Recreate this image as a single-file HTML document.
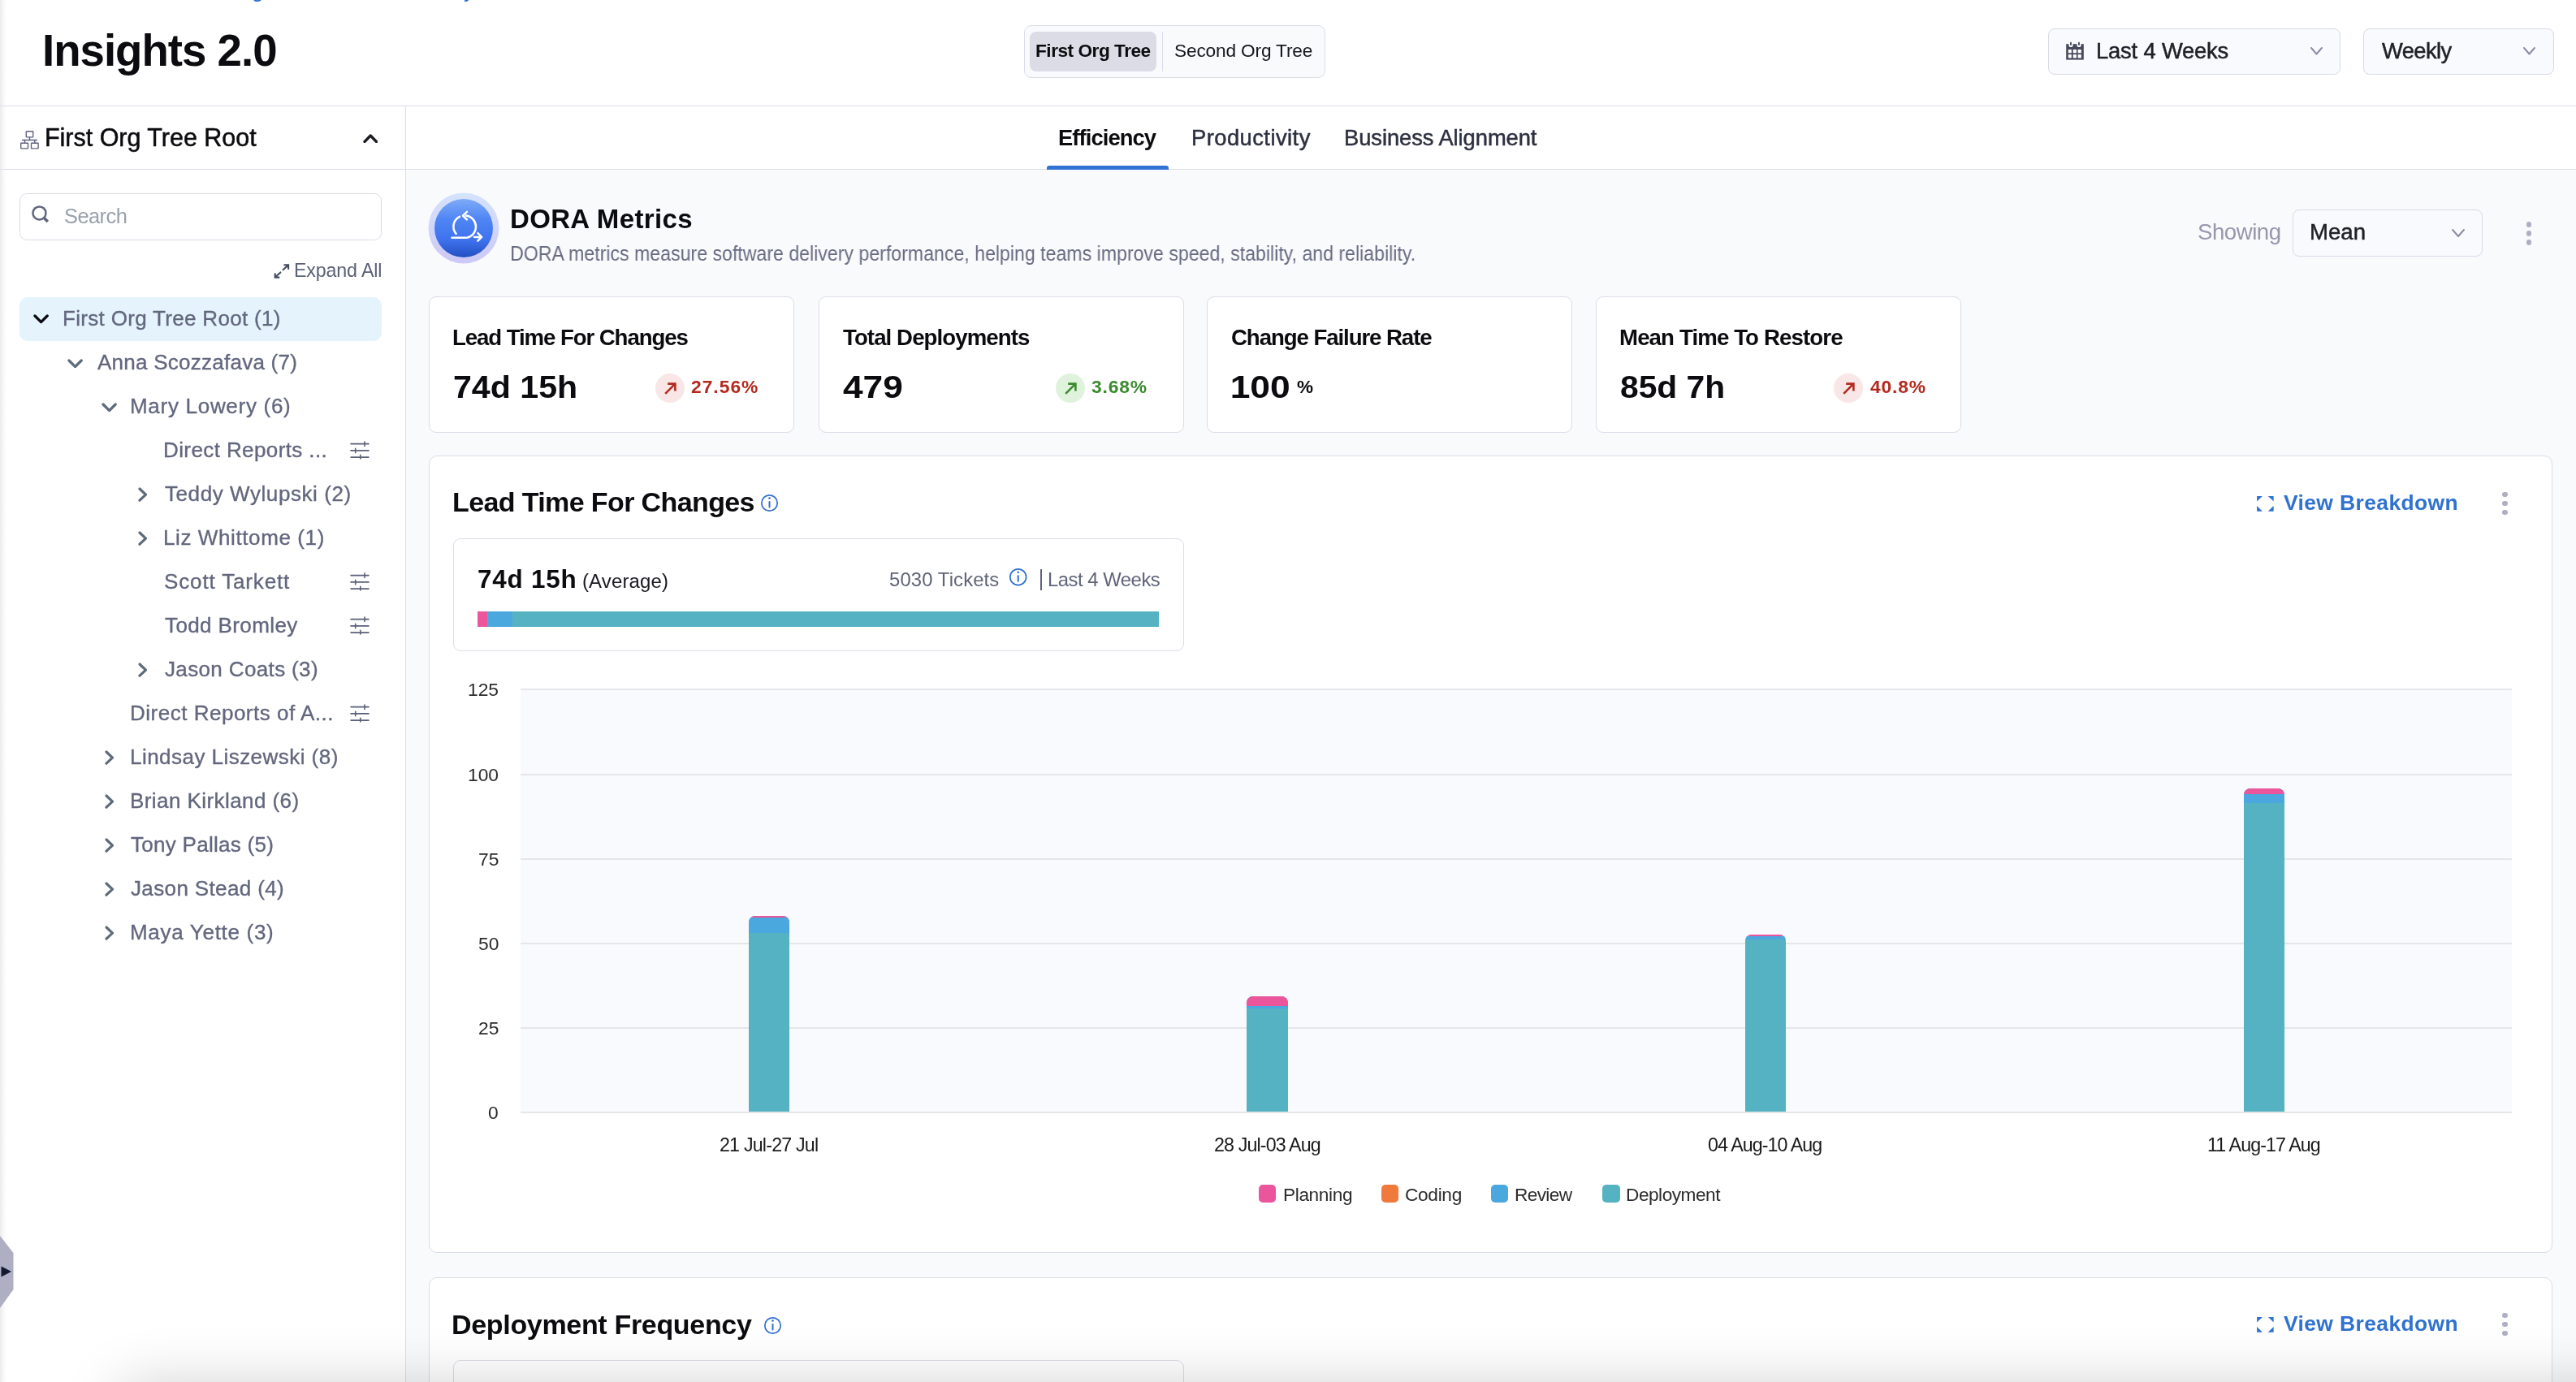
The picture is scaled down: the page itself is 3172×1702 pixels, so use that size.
<!DOCTYPE html><html><head><meta charset="utf-8"><style>
html,body{margin:0;padding:0;width:3172px;height:1702px;overflow:hidden;background:#fff}
body{position:relative;font-family:"Liberation Sans",sans-serif}
.t{position:absolute;white-space:nowrap;font-family:"Liberation Sans",sans-serif;will-change:transform}
</style></head><body>
<div style="position:absolute;left:0px;top:0px;width:3172px;height:1702px;box-sizing:border-box;background:#fff"></div>
<div style="position:absolute;left:500px;top:209px;width:2672px;height:1493px;box-sizing:border-box;background:#f9fafc"></div>
<div style="position:absolute;left:0px;top:0px;width:8px;height:1702px;box-sizing:border-box;background:linear-gradient(90deg,#ececee,#f8f8f9 55%,rgba(255,255,255,0))"></div>
<div style="position:absolute;left:0px;top:130px;width:3172px;height:1px;box-sizing:border-box;background:#dcdde8"></div>
<div style="position:absolute;left:499px;top:131px;width:1px;height:1571px;box-sizing:border-box;background:#dcdde8"></div>
<div style="position:absolute;left:0px;top:208px;width:3172px;height:1px;box-sizing:border-box;background:#dcdde8"></div>
<div class="t" style="left:310px;top:-25.5px;font-size:26px;line-height:26px;color:#2f6fd0">g</div>
<div class="t" style="left:571px;top:-25.5px;font-size:26px;line-height:26px;color:#2f6fd0">y</div>
<div class="t" style="left:52.24px;top:36.32px;font-size:54.65px;line-height:54.65px;letter-spacing:-1.007px;font-weight:700;color:#0c0c10;">Insights 2.0</div>
<div style="position:absolute;left:1261px;top:31px;width:371px;height:65px;box-sizing:border-box;background:#f9fafc;border:1.5px solid #dcdce8;border-radius:9px"></div>
<div style="position:absolute;left:1268px;top:39px;width:156px;height:49px;box-sizing:border-box;background:#dcdce6;border-radius:8px"></div>
<div style="position:absolute;left:1431px;top:39px;width:1px;height:49px;box-sizing:border-box;background:#dcdce8"></div>
<div class="t" style="left:1274.78px;top:50.70px;font-size:22.67px;line-height:22.67px;letter-spacing:-0.493px;font-weight:700;color:#0c0c10;">First Org Tree</div>
<div class="t" style="left:1446.47px;top:50.70px;font-size:22.67px;line-height:22.67px;letter-spacing:-0.153px;font-weight:400;color:#16161c;">Second Org Tree</div>
<div style="position:absolute;left:2522px;top:35px;width:360px;height:57px;box-sizing:border-box;background:#f9fafd;border:1.5px solid #d8d9e6;border-radius:8px"></div>
<div style="position:absolute;left:2910px;top:35px;width:235px;height:57px;box-sizing:border-box;background:#f9fafd;border:1.5px solid #d8d9e6;border-radius:8px"></div>
<div class="t" style="left:2580.76px;top:49.16px;font-size:27.33px;line-height:27.33px;letter-spacing:-0.166px;font-weight:400;color:#1f2028;-webkit-text-stroke:0.5px #1f2028;">Last 4 Weeks</div>
<div class="t" style="left:2933.48px;top:49.16px;font-size:27.33px;line-height:27.33px;letter-spacing:-0.584px;font-weight:400;color:#1f2028;-webkit-text-stroke:0.5px #1f2028;">Weekly</div>
<svg style="position:absolute;left:2543px;top:51px" width="24" height="24" viewBox="0 0 24 24">
<path d="M1.2 3.2 H22.8 V22.6 H1.2 Z" fill="#474a5e"/>
<g fill="#fff"><rect x="3.8" y="10" width="4" height="4.3"/><rect x="9.7" y="10" width="4.2" height="4.3"/><rect x="15.6" y="10" width="4.2" height="4.3"/>
<rect x="3.8" y="16.1" width="4" height="4.3"/><rect x="9.7" y="16.1" width="4.2" height="4.3"/><rect x="15.6" y="16.1" width="4.2" height="4.3"/>
<circle cx="7" cy="4.4" r="2.6"/><circle cx="17" cy="4.4" r="2.6"/></g>
<rect x="6" y="0.8" width="1.9" height="4.2" rx="0.9" fill="#474a5e"/><rect x="16" y="0.8" width="1.9" height="4.2" rx="0.9" fill="#474a5e"/>
</svg>
<svg style="position:absolute;left:2843.5px;top:57.25px" width="17" height="11.5" viewBox="0 0 17 11.5"><path d="M2 2 L8.5 9.5 L15 2" fill="none" stroke="#8a8ca3" stroke-width="2" stroke-linecap="round" stroke-linejoin="round"/></svg>
<svg style="position:absolute;left:3105.5px;top:57.25px" width="17" height="11.5" viewBox="0 0 17 11.5"><path d="M2 2 L8.5 9.5 L15 2" fill="none" stroke="#8a8ca3" stroke-width="2" stroke-linecap="round" stroke-linejoin="round"/></svg>
<svg style="position:absolute;left:24px;top:159px" width="26" height="27" viewBox="0 0 26 27">
<g fill="none" stroke="#5f6180" stroke-width="1.4">
<rect x="8.3" y="2.7" width="8.4" height="7.2" rx="0.6"/>
<path d="M12.5 9.9 V13.5 M3 13.5 H22 M6.5 13.5 V17.2 M18.8 13.5 V17.2"/>
<rect x="1.7" y="17.2" width="8.8" height="6.7" rx="0.6"/><rect x="14.5" y="17.2" width="8.6" height="6.7" rx="0.6"/>
</g></svg>
<div class="t" style="left:55.00px;top:154.15px;font-size:30.52px;line-height:30.52px;letter-spacing:-0.027px;font-weight:400;color:#0c0c10;-webkit-text-stroke:0.5px #0c0c10;">First Org Tree Root</div>
<svg style="position:absolute;left:446.75px;top:164.75px" width="18.5" height="11.5" viewBox="0 0 18.5 11.5"><path d="M2 9.5 L9.25 2 L16.5 9.5" fill="none" stroke="#1c1c22" stroke-width="3.3" stroke-linecap="round" stroke-linejoin="round"/></svg>
<div style="position:absolute;left:24px;top:238px;width:446px;height:58px;box-sizing:border-box;background:#fff;border:1.5px solid #dcdce8;border-radius:9px"></div>
<svg style="position:absolute;left:37px;top:251px" width="26" height="26" viewBox="0 0 26 26">
<circle cx="11.5" cy="11.4" r="8.0" fill="none" stroke="#62667f" stroke-width="2.5"/>
<path d="M17 17 L21.8 22" stroke="#62667f" stroke-width="3.6" stroke-linecap="butt"/></svg>
<div class="t" style="left:79.34px;top:253.76px;font-size:25.44px;line-height:25.44px;letter-spacing:-0.558px;font-weight:400;color:#98a1ad;">Search</div>
<svg style="position:absolute;left:336px;top:324px" width="22" height="20" viewBox="0 0 22 20">
<g fill="none" stroke="#424b5e" stroke-width="2.1" stroke-linecap="round" stroke-linejoin="miter">
<path d="M14.2 2.3 H19.1 V7.1 M19.1 2.3 L12.6 8.3 M2.7 13.2 V17.6 H7.5 M2.7 17.6 L9.4 11.4"/></g></svg>
<div class="t" style="left:362.09px;top:321.61px;font-size:23.26px;line-height:23.26px;letter-spacing:-0.160px;font-weight:400;color:#5b6176;">Expand All</div>
<div style="position:absolute;left:24px;top:366px;width:446px;height:54px;box-sizing:border-box;background:#e5f3fc;border-radius:10px"></div>
<div class="t" style="left:77.07px;top:378.87px;font-size:26.02px;line-height:26.02px;letter-spacing:0.312px;font-weight:400;color:#62677e;-webkit-text-stroke:0.35px #62677e;">First Org Tree Root (1)</div>
<svg style="position:absolute;left:41.0px;top:387.2px" width="19.2" height="11.6" viewBox="0 0 19.2 11.6"><path d="M2 2 L9.6 9.6 L17.2 2" fill="none" stroke="#0c0c10" stroke-width="3.3" stroke-linecap="round" stroke-linejoin="round"/></svg>
<div class="t" style="left:120.35px;top:433.27px;font-size:26.02px;line-height:26.02px;letter-spacing:0.241px;font-weight:400;color:#62677e;-webkit-text-stroke:0.35px #62677e;">Anna Scozzafava (7)</div>
<svg style="position:absolute;left:83.10000000000001px;top:441.59999999999997px" width="19.2" height="11.6" viewBox="0 0 19.2 11.6"><path d="M2 2 L9.6 9.6 L17.2 2" fill="none" stroke="#5e6b7a" stroke-width="3.3" stroke-linecap="round" stroke-linejoin="round"/></svg>
<div class="t" style="left:159.87px;top:487.27px;font-size:26.02px;line-height:26.02px;letter-spacing:0.700px;font-weight:400;color:#62677e;-webkit-text-stroke:0.35px #62677e;">Mary Lowery (6)</div>
<svg style="position:absolute;left:124.9px;top:495.59999999999997px" width="19.2" height="11.6" viewBox="0 0 19.2 11.6"><path d="M2 2 L9.6 9.6 L17.2 2" fill="none" stroke="#5e6b7a" stroke-width="3.3" stroke-linecap="round" stroke-linejoin="round"/></svg>
<div class="t" style="left:201.27px;top:541.27px;font-size:26.02px;line-height:26.02px;letter-spacing:0.389px;font-weight:400;color:#62677e;-webkit-text-stroke:0.35px #62677e;">Direct Reports ...</div>
<svg style="position:absolute;left:430px;top:542px" width="26" height="24" viewBox="0 0 26 24">
<g stroke="#5a5f7a" stroke-width="1.6" stroke-linecap="round" fill="none">
<path d="M2 4.6 H24 M2 12.9 H24 M2 21.1 H24 M19 2 V7.5 M7.7 10.2 V15.7 M13.8 18.4 V23"/></g></svg>
<div class="t" style="left:202.82px;top:595.27px;font-size:26.02px;line-height:26.02px;letter-spacing:0.568px;font-weight:400;color:#62677e;-webkit-text-stroke:0.35px #62677e;">Teddy Wylupski (2)</div>
<svg style="position:absolute;left:169.75px;top:599.9px" width="11.5" height="18.2" viewBox="0 0 11.5 18.2"><path d="M2 2 L9.5 9.1 L2 16.2" fill="none" stroke="#5e6b7a" stroke-width="3.2" stroke-linecap="round" stroke-linejoin="round"/></svg>
<div class="t" style="left:201.27px;top:649.27px;font-size:26.02px;line-height:26.02px;letter-spacing:0.597px;font-weight:400;color:#62677e;-webkit-text-stroke:0.35px #62677e;">Liz Whittome (1)</div>
<svg style="position:absolute;left:169.75px;top:653.9px" width="11.5" height="18.2" viewBox="0 0 11.5 18.2"><path d="M2 2 L9.5 9.1 L2 16.2" fill="none" stroke="#5e6b7a" stroke-width="3.2" stroke-linecap="round" stroke-linejoin="round"/></svg>
<div class="t" style="left:202.22px;top:703.27px;font-size:26.02px;line-height:26.02px;letter-spacing:0.853px;font-weight:400;color:#62677e;-webkit-text-stroke:0.35px #62677e;">Scott Tarkett</div>
<svg style="position:absolute;left:430px;top:704px" width="26" height="24" viewBox="0 0 26 24">
<g stroke="#5a5f7a" stroke-width="1.6" stroke-linecap="round" fill="none">
<path d="M2 4.6 H24 M2 12.9 H24 M2 21.1 H24 M19 2 V7.5 M7.7 10.2 V15.7 M13.8 18.4 V23"/></g></svg>
<div class="t" style="left:202.82px;top:757.27px;font-size:26.02px;line-height:26.02px;letter-spacing:0.388px;font-weight:400;color:#62677e;-webkit-text-stroke:0.35px #62677e;">Todd Bromley</div>
<svg style="position:absolute;left:430px;top:758px" width="26" height="24" viewBox="0 0 26 24">
<g stroke="#5a5f7a" stroke-width="1.6" stroke-linecap="round" fill="none">
<path d="M2 4.6 H24 M2 12.9 H24 M2 21.1 H24 M19 2 V7.5 M7.7 10.2 V15.7 M13.8 18.4 V23"/></g></svg>
<div class="t" style="left:202.99px;top:811.27px;font-size:26.02px;line-height:26.02px;letter-spacing:0.355px;font-weight:400;color:#62677e;-webkit-text-stroke:0.35px #62677e;">Jason Coats (3)</div>
<svg style="position:absolute;left:169.75px;top:815.9px" width="11.5" height="18.2" viewBox="0 0 11.5 18.2"><path d="M2 2 L9.5 9.1 L2 16.2" fill="none" stroke="#5e6b7a" stroke-width="3.2" stroke-linecap="round" stroke-linejoin="round"/></svg>
<div class="t" style="left:159.57px;top:865.27px;font-size:26.02px;line-height:26.02px;letter-spacing:0.499px;font-weight:400;color:#62677e;-webkit-text-stroke:0.35px #62677e;">Direct Reports of A...</div>
<svg style="position:absolute;left:430px;top:866px" width="26" height="24" viewBox="0 0 26 24">
<g stroke="#5a5f7a" stroke-width="1.6" stroke-linecap="round" fill="none">
<path d="M2 4.6 H24 M2 12.9 H24 M2 21.1 H24 M19 2 V7.5 M7.7 10.2 V15.7 M13.8 18.4 V23"/></g></svg>
<div class="t" style="left:159.57px;top:919.27px;font-size:26.02px;line-height:26.02px;letter-spacing:0.454px;font-weight:400;color:#62677e;-webkit-text-stroke:0.35px #62677e;">Lindsay Liszewski (8)</div>
<svg style="position:absolute;left:128.75px;top:923.9px" width="11.5" height="18.2" viewBox="0 0 11.5 18.2"><path d="M2 2 L9.5 9.1 L2 16.2" fill="none" stroke="#5e6b7a" stroke-width="3.2" stroke-linecap="round" stroke-linejoin="round"/></svg>
<div class="t" style="left:159.57px;top:973.27px;font-size:26.02px;line-height:26.02px;letter-spacing:0.421px;font-weight:400;color:#62677e;-webkit-text-stroke:0.35px #62677e;">Brian Kirkland (6)</div>
<svg style="position:absolute;left:128.75px;top:977.9px" width="11.5" height="18.2" viewBox="0 0 11.5 18.2"><path d="M2 2 L9.5 9.1 L2 16.2" fill="none" stroke="#5e6b7a" stroke-width="3.2" stroke-linecap="round" stroke-linejoin="round"/></svg>
<div class="t" style="left:161.12px;top:1027.27px;font-size:26.02px;line-height:26.02px;letter-spacing:0.273px;font-weight:400;color:#62677e;-webkit-text-stroke:0.35px #62677e;">Tony Pallas (5)</div>
<svg style="position:absolute;left:128.75px;top:1031.9px" width="11.5" height="18.2" viewBox="0 0 11.5 18.2"><path d="M2 2 L9.5 9.1 L2 16.2" fill="none" stroke="#5e6b7a" stroke-width="3.2" stroke-linecap="round" stroke-linejoin="round"/></svg>
<div class="t" style="left:161.29px;top:1081.27px;font-size:26.02px;line-height:26.02px;letter-spacing:0.360px;font-weight:400;color:#62677e;-webkit-text-stroke:0.35px #62677e;">Jason Stead (4)</div>
<svg style="position:absolute;left:128.75px;top:1085.9px" width="11.5" height="18.2" viewBox="0 0 11.5 18.2"><path d="M2 2 L9.5 9.1 L2 16.2" fill="none" stroke="#5e6b7a" stroke-width="3.2" stroke-linecap="round" stroke-linejoin="round"/></svg>
<div class="t" style="left:159.57px;top:1135.27px;font-size:26.02px;line-height:26.02px;letter-spacing:0.690px;font-weight:400;color:#62677e;-webkit-text-stroke:0.35px #62677e;">Maya Yette (3)</div>
<svg style="position:absolute;left:128.75px;top:1139.9px" width="11.5" height="18.2" viewBox="0 0 11.5 18.2"><path d="M2 2 L9.5 9.1 L2 16.2" fill="none" stroke="#5e6b7a" stroke-width="3.2" stroke-linecap="round" stroke-linejoin="round"/></svg>
<svg style="position:absolute;left:0;top:1522px" width="18" height="90" viewBox="0 0 18 90"><path d="M0 0 L16.5 21 V66 L0 89 Z" fill="#aeafc3"/><path d="M1.5 37.5 L14 44 L1.5 50.5 Z" fill="#111a2e"/></svg>
<div class="t" style="left:1303.47px;top:155.86px;font-size:27.33px;line-height:27.33px;letter-spacing:-0.902px;font-weight:700;color:#0c0c10;">Efficiency</div>
<div class="t" style="left:1466.76px;top:155.86px;font-size:27.33px;line-height:27.33px;letter-spacing:0.460px;font-weight:400;color:#2d3040;-webkit-text-stroke:0.5px #2d3040;">Productivity</div>
<div class="t" style="left:1655.36px;top:155.86px;font-size:27.33px;line-height:27.33px;letter-spacing:-0.061px;font-weight:400;color:#2d3040;-webkit-text-stroke:0.5px #2d3040;">Business Alignment</div>
<div style="position:absolute;left:1289px;top:204px;width:150px;height:5px;box-sizing:border-box;background:#3173d5;border-radius:3px 3px 0 0"></div>
<svg style="position:absolute;left:527px;top:237px" width="88" height="88" viewBox="0 0 88 88">
<defs>
<linearGradient id="halo" x1="0" y1="0" x2="0" y2="1"><stop offset="0" stop-color="#d5e3fb"/><stop offset="1" stop-color="#cdc8f6"/></linearGradient>
<radialGradient id="core" cx="0.5" cy="0.45" r="0.6"><stop offset="0" stop-color="#4a7ff4"/><stop offset="0.6" stop-color="#4277ee"/><stop offset="1" stop-color="#2a59cc"/></radialGradient>
<linearGradient id="coreL" x1="0" y1="0" x2="0" y2="1"><stop offset="0" stop-color="#7eabf7"/><stop offset="0.35" stop-color="#4f85f4"/><stop offset="0.7" stop-color="#3f72ee"/><stop offset="1" stop-color="#2250c0"/></linearGradient>
</defs>
<circle cx="44" cy="44" r="43.5" fill="url(#halo)"/>
<circle cx="44" cy="44" r="36" fill="url(#coreL)"/>
<g fill="none" stroke="#fff" stroke-width="2.5" stroke-linecap="round" stroke-linejoin="round">
<path d="M46.9 28.6 A13.8 13.8 0 0 1 48 55.8 H29.5"/>
<path d="M39 29.9 A13.6 13.6 0 0 0 34.6 50.9"/>
<path d="M48 23.8 L42.9 28.6 L48 33.5"/>
<path d="M57 54.9 H66.1 M61.4 50.2 L66.1 54.9 L61.4 59.6"/>
</g>
</svg>
<div class="t" style="left:627.79px;top:252.76px;font-size:32.99px;line-height:32.99px;letter-spacing:0.358px;font-weight:700;color:#0c0c10;">DORA Metrics</div>
<div class="t" style="left:627.95px;top:299.83px;font-size:25.00px;line-height:25.00px;letter-spacing:0.000px;font-weight:400;color:#676b82;transform:scaleX(0.9252);transform-origin:2.05px 0;">DORA metrics measure software delivery performance, helping teams improve speed, stability, and reliability.</div>
<div class="t" style="left:2706.05px;top:271.81px;font-size:27.62px;line-height:27.62px;letter-spacing:-0.484px;font-weight:400;color:#9597ad;">Showing</div>
<div style="position:absolute;left:2823px;top:258px;width:234px;height:58px;box-sizing:border-box;background:#f9fafd;border:1.5px solid #d8d9e6;border-radius:8px"></div>
<div class="t" style="left:2844.33px;top:272.11px;font-size:27.62px;line-height:27.62px;letter-spacing:-0.008px;font-weight:400;color:#1f2028;-webkit-text-stroke:0.5px #1f2028;">Mean</div>
<svg style="position:absolute;left:3018.0px;top:281.0px" width="18" height="12" viewBox="0 0 18 12"><path d="M2 2 L9.0 10 L16 2" fill="none" stroke="#8a8ca3" stroke-width="2" stroke-linecap="round" stroke-linejoin="round"/></svg>
<div style="position:absolute;left:3110.6px;top:273.00000000000006px;width:6.8px;height:6.8px;border-radius:50%;background:#aeafc2"></div>
<div style="position:absolute;left:3110.6px;top:283.90000000000003px;width:6.8px;height:6.8px;border-radius:50%;background:#aeafc2"></div>
<div style="position:absolute;left:3110.6px;top:294.8px;width:6.8px;height:6.8px;border-radius:50%;background:#aeafc2"></div>
<div style="position:absolute;left:528px;top:365px;width:450px;height:168px;box-sizing:border-box;background:#fff;border:1.5px solid #dcdde8;border-radius:9px"></div>
<div class="t" style="left:556.65px;top:401.61px;font-size:27.62px;line-height:27.62px;letter-spacing:-1.079px;font-weight:700;color:#0c0c10;">Lead Time For Changes</div>
<div class="t" style="left:557.81px;top:457.07px;font-size:39.24px;line-height:39.24px;letter-spacing:0.000px;font-weight:700;color:#0c0c10;transform:scaleX(1.0490);transform-origin:1.69px 0;">74d 15h</div>
<div class="t" style="left:851.21px;top:465.48px;font-size:22.82px;line-height:22.82px;letter-spacing:0.999px;font-weight:700;color:#b42a1f;">27.56%</div>
<svg style="position:absolute;left:807px;top:460px" width="36" height="36" viewBox="0 0 36 36"><circle cx="18" cy="18" r="18" fill="#f8e7e6"/>
<g fill="none" stroke="#b42a1f" stroke-width="2.6" stroke-linecap="butt" stroke-linejoin="miter"><path d="M12.2 24.8 L23.6 13.4 M15.2 12.6 H24.4 V21.6"/></g></svg>
<div style="position:absolute;left:1007.5px;top:365px;width:450.0px;height:168px;box-sizing:border-box;background:#fff;border:1.5px solid #dcdde8;border-radius:9px"></div>
<div class="t" style="left:1037.69px;top:401.61px;font-size:27.62px;line-height:27.62px;letter-spacing:-0.910px;font-weight:700;color:#0c0c10;">Total Deployments</div>
<div class="t" style="left:1038.41px;top:457.07px;font-size:39.24px;line-height:39.24px;letter-spacing:0.000px;font-weight:700;color:#0c0c10;transform:scaleX(1.1288);transform-origin:0.59px 0;">479</div>
<div class="t" style="left:1344.38px;top:465.48px;font-size:22.82px;line-height:22.82px;letter-spacing:0.855px;font-weight:700;color:#3b8a2f;">3.68%</div>
<svg style="position:absolute;left:1299.9px;top:460px" width="36" height="36" viewBox="0 0 36 36"><circle cx="18" cy="18" r="18" fill="#dff3dc"/>
<g fill="none" stroke="#3b8a2f" stroke-width="2.6" stroke-linecap="butt" stroke-linejoin="miter"><path d="M12.2 24.8 L23.6 13.4 M15.2 12.6 H24.4 V21.6"/></g></svg>
<div style="position:absolute;left:1486.4px;top:365px;width:450.0px;height:168px;box-sizing:border-box;background:#fff;border:1.5px solid #dcdde8;border-radius:9px"></div>
<div class="t" style="left:1515.77px;top:401.61px;font-size:27.62px;line-height:27.62px;letter-spacing:-1.075px;font-weight:700;color:#0c0c10;">Change Failure Rate</div>
<div class="t" style="left:1515.43px;top:457.07px;font-size:39.24px;line-height:39.24px;letter-spacing:0.000px;font-weight:700;color:#0c0c10;transform:scaleX(1.1320);transform-origin:2.47px 0;">100</div>
<div style="position:absolute;left:1965px;top:365px;width:450px;height:168px;box-sizing:border-box;background:#fff;border:1.5px solid #dcdde8;border-radius:9px"></div>
<div class="t" style="left:1993.65px;top:401.61px;font-size:27.62px;line-height:27.62px;letter-spacing:-0.869px;font-weight:700;color:#0c0c10;">Mean Time To Restore</div>
<div class="t" style="left:1995.25px;top:457.07px;font-size:39.24px;line-height:39.24px;letter-spacing:0.000px;font-weight:700;color:#0c0c10;transform:scaleX(1.0402);transform-origin:1.25px 0;">85d 7h</div>
<div class="t" style="left:2302.65px;top:465.48px;font-size:22.82px;line-height:22.82px;letter-spacing:0.810px;font-weight:700;color:#b42a1f;">40.8%</div>
<svg style="position:absolute;left:2258px;top:460px" width="36" height="36" viewBox="0 0 36 36"><circle cx="18" cy="18" r="18" fill="#f8e7e6"/>
<g fill="none" stroke="#b42a1f" stroke-width="2.6" stroke-linecap="butt" stroke-linejoin="miter"><path d="M12.2 24.8 L23.6 13.4 M15.2 12.6 H24.4 V21.6"/></g></svg>
<div class="t" style="left:1597.24px;top:466.42px;font-size:22.53px;line-height:22.53px;letter-spacing:-2.477px;font-weight:700;color:#0c0c10;">%</div>
<div style="position:absolute;left:528px;top:561px;width:2615px;height:982px;box-sizing:border-box;background:#fff;border:1.5px solid #dcdde8;border-radius:10px"></div>
<div class="t" style="left:556.52px;top:600.60px;font-size:34.01px;line-height:34.01px;letter-spacing:-0.613px;font-weight:700;color:#0c0c10;">Lead Time For Changes</div>
<svg style="position:absolute;left:935.2px;top:607.0px" width="25.0" height="25.0" viewBox="0 0 25.0 25.0"><circle cx="12.5" cy="12.5" r="9.7" fill="none" stroke="#2f6fd0" stroke-width="1.7"/>
<path d="M12.5 11.0 V17.5" stroke="#2f6fd0" stroke-width="2" stroke-linecap="round"/><circle cx="12.5" cy="6.5" r="1.3" fill="#2f6fd0"/></svg>
<svg style="position:absolute;left:2778px;top:608px" width="23" height="24" viewBox="0 0 23 24">
<g fill="#2f72cf"><path d="M1.1 2.9 H7.9 L1.1 9.5 Z"/><path d="M21.6 2.9 H14.8 L21.6 9.5 Z"/><path d="M1.1 21.7 V15.1 L7.9 21.7 Z"/><path d="M21.6 21.7 H14.8 L21.6 15.1 Z"/></g></svg>
<div class="t" style="left:2811.82px;top:606.10px;font-size:26.45px;line-height:26.45px;letter-spacing:0.390px;font-weight:700;color:#2f72cf;">View Breakdown</div>
<div style="position:absolute;left:3081.0px;top:605.7px;width:6.8px;height:6.8px;border-radius:50%;background:#aeafc2"></div>
<div style="position:absolute;left:3081.0px;top:616.6px;width:6.8px;height:6.8px;border-radius:50%;background:#aeafc2"></div>
<div style="position:absolute;left:3081.0px;top:627.5px;width:6.8px;height:6.8px;border-radius:50%;background:#aeafc2"></div>
<div style="position:absolute;left:558px;top:663px;width:900px;height:139px;box-sizing:border-box;background:#fff;border:1.5px solid #dcdde8;border-radius:9px"></div>
<div class="t" style="left:588.35px;top:697.81px;font-size:31.40px;line-height:31.40px;letter-spacing:0.812px;font-weight:700;color:#0c0c10;">74d 15h</div>
<div class="t" style="left:717.21px;top:704.09px;font-size:23.98px;line-height:23.98px;letter-spacing:0.138px;font-weight:400;color:#1a1a22;">(Average)</div>
<div class="t" style="left:1094.85px;top:702.01px;font-size:23.84px;line-height:23.84px;letter-spacing:0.135px;font-weight:400;color:#5f6478;">5030 Tickets</div>
<svg style="position:absolute;left:1241.1px;top:697.9px" width="25.4" height="25.4" viewBox="0 0 25.4 25.4"><circle cx="12.7" cy="12.7" r="9.899999999999999" fill="none" stroke="#2f6fd0" stroke-width="1.7"/>
<path d="M12.7 11.2 V17.7" stroke="#2f6fd0" stroke-width="2" stroke-linecap="round"/><circle cx="12.7" cy="6.699999999999999" r="1.3" fill="#2f6fd0"/></svg>
<div style="position:absolute;left:1280.5px;top:701px;width:2.0px;height:26px;box-sizing:border-box;background:#5f6278"></div>
<div class="t" style="left:1289.54px;top:702.01px;font-size:23.84px;line-height:23.84px;letter-spacing:-0.470px;font-weight:400;color:#5f6478;">Last 4 Weeks</div>
<div style="position:absolute;left:588px;top:753px;width:839px;height:18.5px;box-sizing:border-box;background:#55b2c2"></div>
<div style="position:absolute;left:588px;top:753px;width:11.5px;height:18.5px;box-sizing:border-box;background:#ea559b"></div>
<div style="position:absolute;left:599.5px;top:753px;width:1.0px;height:18.5px;box-sizing:border-box;background:#ef7a3c"></div>
<div style="position:absolute;left:600.5px;top:753px;width:30.5px;height:18.5px;box-sizing:border-box;background:#4ba8de"></div>
<div style="position:absolute;left:641px;top:849px;width:2452px;height:521px;box-sizing:border-box;background:#f9fafd"></div>
<div style="position:absolute;left:641px;top:848px;width:2452px;height:2px;box-sizing:border-box;background:#e6e6e9"></div>
<div class="t" style="left:575.88px;top:838.38px;font-size:22.82px;line-height:22.82px;letter-spacing:0.000px;font-weight:400;color:#2b2b2b;">125</div>
<div style="position:absolute;left:641px;top:953px;width:2452px;height:2px;box-sizing:border-box;background:#e6e6e9"></div>
<div class="t" style="left:575.82px;top:942.53px;font-size:22.82px;line-height:22.82px;letter-spacing:0.000px;font-weight:400;color:#2b2b2b;">100</div>
<div style="position:absolute;left:641px;top:1057px;width:2452px;height:2px;box-sizing:border-box;background:#e6e6e9"></div>
<div class="t" style="left:588.57px;top:1046.68px;font-size:22.82px;line-height:22.82px;letter-spacing:0.000px;font-weight:400;color:#2b2b2b;">75</div>
<div style="position:absolute;left:641px;top:1161px;width:2452px;height:2px;box-sizing:border-box;background:#e6e6e9"></div>
<div class="t" style="left:588.51px;top:1150.83px;font-size:22.82px;line-height:22.82px;letter-spacing:0.000px;font-weight:400;color:#2b2b2b;">50</div>
<div style="position:absolute;left:641px;top:1265px;width:2452px;height:2px;box-sizing:border-box;background:#e6e6e9"></div>
<div class="t" style="left:588.57px;top:1254.98px;font-size:22.82px;line-height:22.82px;letter-spacing:0.000px;font-weight:400;color:#2b2b2b;">25</div>
<div style="position:absolute;left:641px;top:1369px;width:2452px;height:2px;box-sizing:border-box;background:#e6e6e9"></div>
<div class="t" style="left:601.20px;top:1359.13px;font-size:22.82px;line-height:22.82px;letter-spacing:0.000px;font-weight:400;color:#2b2b2b;">0</div>
<div style="position:absolute;left:921.6px;top:1128px;width:50.3px;height:241.20000000000005px;border-radius:8px 8px 0 0;overflow:hidden;background:#55b2c2"><div style="position:absolute;left:0;top:0;width:100%;height:2px;background:#ea559b"></div><div style="position:absolute;left:0;top:2px;width:100%;height:19px;background:#4ba8de"></div></div>
<div style="position:absolute;left:1535.4px;top:1226.9px;width:50.3px;height:142.29999999999995px;border-radius:8px 8px 0 0;overflow:hidden;background:#55b2c2"><div style="position:absolute;left:0;top:0;width:100%;height:12.099999999999909px;background:#ea559b"></div><div style="position:absolute;left:0;top:12.099999999999909px;width:100%;height:2.7000000000000455px;background:#4ba8de"></div></div>
<div style="position:absolute;left:2149.2px;top:1150.9px;width:50.3px;height:218.29999999999995px;border-radius:8px 8px 0 0;overflow:hidden;background:#55b2c2"><div style="position:absolute;left:0;top:0;width:100%;height:2.2999999999999545px;background:#ea559b"></div><div style="position:absolute;left:0;top:2.2999999999999545px;width:100%;height:4.099999999999909px;background:#4ba8de"></div></div>
<div style="position:absolute;left:2763px;top:971.3px;width:50.3px;height:397.9000000000001px;border-radius:8px 8px 0 0;overflow:hidden;background:#55b2c2"><div style="position:absolute;left:0;top:0;width:100%;height:7.2000000000000455px;background:#ea559b"></div><div style="position:absolute;left:0;top:7.2000000000000455px;width:100%;height:10.799999999999955px;background:#4ba8de"></div></div>
<div class="t" style="left:885.90px;top:1398.71px;font-size:23.26px;line-height:23.26px;letter-spacing:-0.807px;font-weight:400;color:#1a1a1a;">21 Jul-27 Jul</div>
<div class="t" style="left:1494.78px;top:1398.71px;font-size:23.26px;line-height:23.26px;letter-spacing:-0.872px;font-weight:400;color:#1a1a1a;">28 Jul-03 Aug</div>
<div class="t" style="left:2103.13px;top:1398.71px;font-size:23.26px;line-height:23.26px;letter-spacing:-0.939px;font-weight:400;color:#1a1a1a;">04 Aug-10 Aug</div>
<div class="t" style="left:2717.96px;top:1398.71px;font-size:23.26px;line-height:23.26px;letter-spacing:-0.923px;font-weight:400;color:#1a1a1a;">11 Aug-17 Aug</div>
<div style="position:absolute;left:1549.8px;top:1459px;width:21.5px;height:22px;box-sizing:border-box;background:#ea559b;border-radius:5px"></div>
<div class="t" style="left:1579.54px;top:1460.10px;font-size:22.67px;line-height:22.67px;letter-spacing:-0.376px;font-weight:400;color:#2b2b2b;">Planning</div>
<div style="position:absolute;left:1700.5px;top:1459px;width:21.5px;height:22px;box-sizing:border-box;background:#ef7a3c;border-radius:5px"></div>
<div class="t" style="left:1729.85px;top:1460.10px;font-size:22.67px;line-height:22.67px;letter-spacing:-0.309px;font-weight:400;color:#2b2b2b;">Coding</div>
<div style="position:absolute;left:1835.5px;top:1459px;width:21.5px;height:22px;box-sizing:border-box;background:#4ba8de;border-radius:5px"></div>
<div class="t" style="left:1864.74px;top:1460.10px;font-size:22.67px;line-height:22.67px;letter-spacing:-0.649px;font-weight:400;color:#2b2b2b;">Review</div>
<div style="position:absolute;left:1973px;top:1459px;width:21.5px;height:22px;box-sizing:border-box;background:#55b2c2;border-radius:5px"></div>
<div class="t" style="left:2002.14px;top:1460.10px;font-size:22.67px;line-height:22.67px;letter-spacing:-0.485px;font-weight:400;color:#2b2b2b;">Deployment</div>
<div style="position:absolute;left:528px;top:1573px;width:2615px;height:187px;box-sizing:border-box;background:#fff;border:1.5px solid #dcdde8;border-radius:10px"></div>
<div class="t" style="left:555.72px;top:1613.80px;font-size:34.01px;line-height:34.01px;letter-spacing:-0.324px;font-weight:700;color:#0c0c10;">Deployment Frequency</div>
<svg style="position:absolute;left:939.0px;top:1619.5px" width="25.0" height="25.0" viewBox="0 0 25.0 25.0"><circle cx="12.5" cy="12.5" r="9.7" fill="none" stroke="#2f6fd0" stroke-width="1.7"/>
<path d="M12.5 11.0 V17.5" stroke="#2f6fd0" stroke-width="2" stroke-linecap="round"/><circle cx="12.5" cy="6.5" r="1.3" fill="#2f6fd0"/></svg>
<svg style="position:absolute;left:2778px;top:1619px" width="23" height="24" viewBox="0 0 23 24">
<g fill="#2f72cf"><path d="M1.1 2.9 H7.9 L1.1 9.5 Z"/><path d="M21.6 2.9 H14.8 L21.6 9.5 Z"/><path d="M1.1 21.7 V15.1 L7.9 21.7 Z"/><path d="M21.6 21.7 H14.8 L21.6 15.1 Z"/></g></svg>
<div class="t" style="left:2811.82px;top:1617.10px;font-size:26.45px;line-height:26.45px;letter-spacing:0.390px;font-weight:700;color:#2f72cf;">View Breakdown</div>
<div style="position:absolute;left:3081.0px;top:1616.6999999999998px;width:6.8px;height:6.8px;border-radius:50%;background:#aeafc2"></div>
<div style="position:absolute;left:3081.0px;top:1627.6px;width:6.8px;height:6.8px;border-radius:50%;background:#aeafc2"></div>
<div style="position:absolute;left:3081.0px;top:1638.5px;width:6.8px;height:6.8px;border-radius:50%;background:#aeafc2"></div>
<div style="position:absolute;left:558px;top:1675px;width:900px;height:125px;box-sizing:border-box;background:#fff;border:1.5px solid #dcdde8;border-radius:9px"></div>
<div style="position:absolute;left:0;top:1540px;width:3172px;height:162px;overflow:hidden"><div style="position:absolute;left:150px;top:168px;width:3300px;height:200px;box-shadow:0 0 75px rgba(0,0,0,0.2)"></div></div>
</body></html>
